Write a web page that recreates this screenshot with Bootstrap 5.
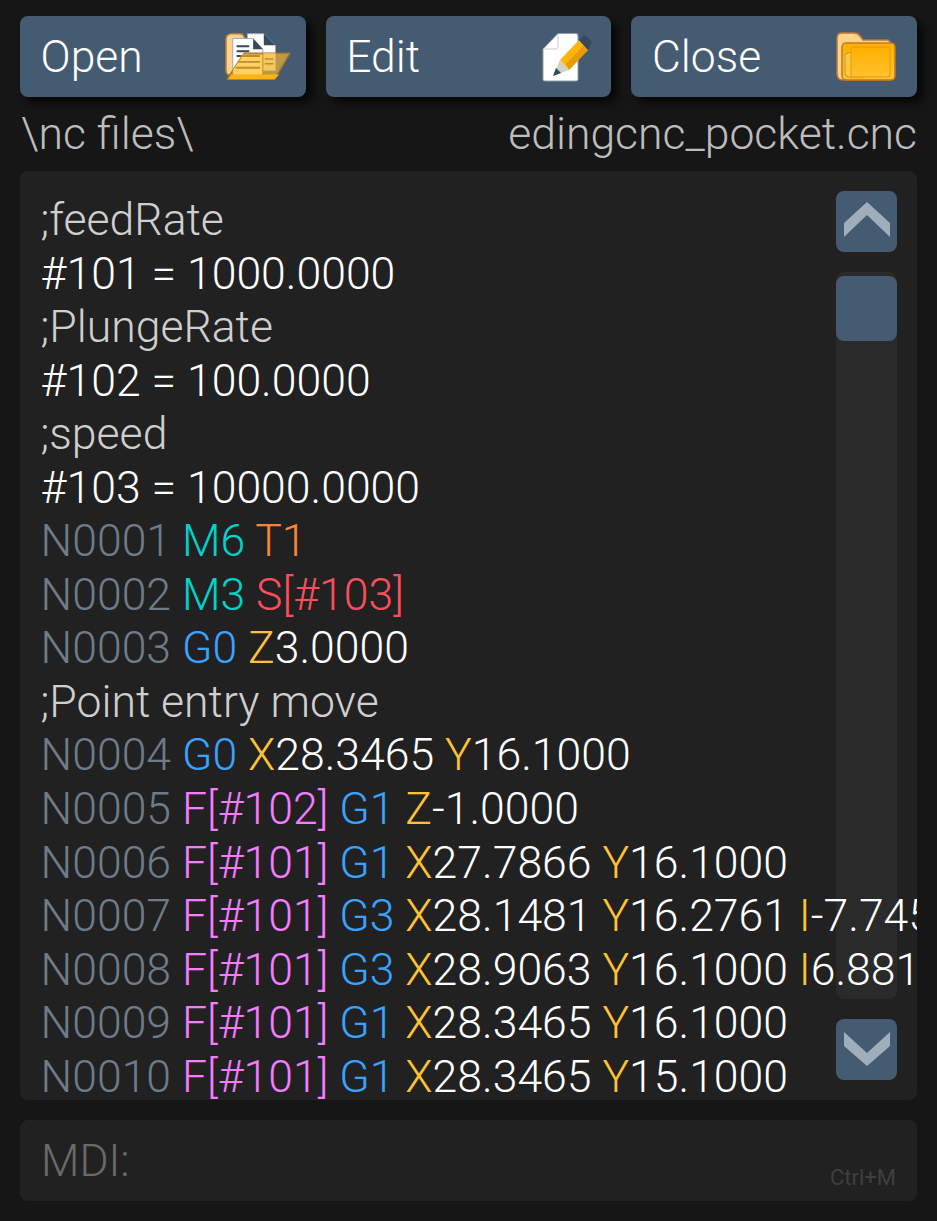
<!DOCTYPE html>
<html lang="en"><head><meta charset="utf-8">
<link href="https://cdn.jsdelivr.net/npm/bootstrap@5.3.0/dist/css/bootstrap.min.css" rel="stylesheet">
<style>
html,body{height:100%;}
body{background:#161616;font-family:Roboto,"Liberation Sans",sans-serif;font-weight:300;width:937px;height:1221px;overflow:hidden;padding:16px 20px 20px;}
.tool-row{gap:20px;height:81px;}
.tool-btn{flex:1 1 0;background:#445b72;color:#fff;border:0;border-radius:8px;font-size:44.4px;font-weight:300;line-height:1;padding:0 21px 0 21px;box-shadow:6px 6px 8px rgba(0,0,0,.7);height:81px;}
.btn-label{margin:2px 0 0 -.4px;}
.tool-btn svg{display:block;}
.ico-open{margin-right:-6px;}
.ico-edit{margin-right:-2px;}
.path-row{height:74px;padding:0 0 10px 1px;color:#bdbdbd;font-size:44.5px;line-height:74px;}
.code-panel{position:relative;height:929px;background:#212121;border-radius:8px;overflow:hidden;padding:23px 0 0 20.6px;font-size:44.56px;line-height:53.56px;white-space:nowrap;color:#fff;}
.code-line{height:53.56px;position:relative;z-index:2;}
.cm{color:#cfcfcf}.ln{color:#6e7c8a}.mc{color:#00d2ca}.tc{color:#ff8438}.sc{color:#ff4d5e}.gc{color:#3aa3ff}.ax{color:#ffc233}.fc{color:#f47cff}
.sb-track{position:absolute;left:816px;top:101px;width:61px;height:727px;background:#2a2a2a;border-radius:8px;z-index:1;}
.sb-btn{position:absolute;left:816px;width:61px;background:#445b72;border-radius:8px;z-index:1;display:flex;align-items:center;justify-content:center;}
.sb-up{top:20px;height:61px;}
.sb-thumb{top:105px;height:65px;}
.sb-down{top:848px;height:61px;}
.sb-ico-up{margin-top:-3px;}
.sb-ico-down{margin-top:-1px;}
.mdi-box{position:relative;height:81px;margin-top:20px;background:#212121;border-radius:8px;color:#6a6a6a;font-size:44.4px;line-height:83px;padding-left:21px;}
.mdi-hint{position:absolute;right:21px;bottom:10px;font-size:22px;line-height:26px;color:#3f3f3f;font-weight:400;}
</style></head><body>
<div class="d-flex tool-row">
<button class="tool-btn d-flex align-items-center justify-content-between"><span class="btn-label">Open</span>
<svg class="ico-open" width="66" height="50" viewBox="0 0 68 50">
<path d="M1 7q0-6 6-6h8q5 0 5 5v38H6q-5 0-5-5z" fill="#fdd28a" stroke="#b9783a" stroke-width="1.5"/>
<path d="M23 1h17l12 12v26H23z" fill="#fff" stroke="#9aa8b2"/><path d="M40 1l12 12H40z" fill="#34495a"/>
<path d="M8 6h21l10 11v27H8z" fill="#fff" stroke="#9aa8b2"/><path d="M29 6l10 11H29z" fill="#34495a"/>
<path d="M12 14h13M12 19h13M12 24h8" stroke="#34495a" stroke-width="2"/>
<path d="M2 48L20 21h47L51 48z" fill="#c9a043" fill-opacity=".9" stroke="#a5702c" stroke-width="1.5" stroke-linejoin="round"/>
<path d="M39 21h13v18H39z" fill="#ffd163" fill-opacity=".8"/><path d="M41 27h9M41 32h9" stroke="#bd8e2b" stroke-width="1.5"/>
<path d="M19 22H39V44H8V38z" fill="#ffd163" stroke="#c98a25"/>
<path d="M16 24h20M13 30h23M11 36h25" stroke="#bd8e2b" stroke-width="2"/>
<path d="M3 48l4-5h49l-5 5z" fill="#ffb310"/></svg></button>
<button class="tool-btn d-flex align-items-center justify-content-between"><span class="btn-label">Edit</span>
<svg class="ico-edit" width="50" height="50" viewBox="0 0 50 50">
<path d="M16 1.500h18q2 0 2 2v44q0 1.500-2 1.500H3q-2 0-2-1.500V17z" fill="#fff" stroke="#8f9ea8"/>
<path d="M16 2v13q0 2-2 2H1" fill="none" stroke="#c5ced4"/>
<path d="M18 28L37 8l9 10-19 20z" fill="#ffb60a"/><path d="M24 32L41 14l5 4-19 20z" fill="#e89a00"/>
<path d="M37 8l4-4q2-1 3 0l5 5q1 2 0 3l-3 6z" fill="#34495a"/>
<path d="M18 28l9 10-16 6z" fill="#ccd4c6"/><path d="M11 44l3-8 5 5z" fill="#34495a"/></svg></button>
<button class="tool-btn d-flex align-items-center justify-content-between"><span class="btn-label">Close</span>
<svg width="60" height="50" viewBox="0 0 60 50"><defs><linearGradient id="fg" x1="0" y1="0" x2="0" y2="1"><stop offset="0" stop-color="#ffb000"/><stop offset="1" stop-color="#ffc22e"/></linearGradient></defs>
<path d="M1 6q0-5 5-5h12q4 0 6 3l3 4h24q3 0 3 3v37H7q-6 0-6-6z" fill="#fdd28a" stroke="#b9783a" stroke-width="1.5"/>
<rect x="6" y="11" width="53" height="37" rx="4" fill="url(#fg)" stroke="#c07a1c" stroke-width="1.5"/>
<path d="M9 22l6-2 4-4 3 0v29H13q-4 0-4-4z" fill="#ffc93f" stroke="#d09424"/>
<rect x="15" y="15" width="39" height="30" rx="2" fill="url(#fg)" stroke="#e09a10"/></svg></button>
</div>
<div class="d-flex justify-content-between path-row"><span>\nc files\</span><span>edingcnc_pocket.cnc</span></div>
<div class="code-panel">
<div class="code-line cm">;feedRate</div>
<div class="code-line">#101 = 1000.0000</div>
<div class="code-line cm">;PlungeRate</div>
<div class="code-line">#102 = 100.0000</div>
<div class="code-line cm">;speed</div>
<div class="code-line">#103 = 10000.0000</div>
<div class="code-line"><span class="ln">N0001</span> <span class="mc">M6</span> <span class="tc">T1</span></div>
<div class="code-line"><span class="ln">N0002</span> <span class="mc">M3</span> <span class="sc">S[#103]</span></div>
<div class="code-line"><span class="ln">N0003</span> <span class="gc">G0</span> <span class="ax">Z</span>3.0000</div>
<div class="code-line cm">;Point entry move</div>
<div class="code-line"><span class="ln">N0004</span> <span class="gc">G0</span> <span class="ax">X</span>28.3465 <span class="ax">Y</span>16.1000</div>
<div class="code-line"><span class="ln">N0005</span> <span class="fc">F[#102]</span> <span class="gc">G1</span> <span class="ax">Z</span>-1.0000</div>
<div class="code-line"><span class="ln">N0006</span> <span class="fc">F[#101]</span> <span class="gc">G1</span> <span class="ax">X</span>27.7866 <span class="ax">Y</span>16.1000</div>
<div class="code-line"><span class="ln">N0007</span> <span class="fc">F[#101]</span> <span class="gc">G3</span> <span class="ax">X</span>28.1481 <span class="ax">Y</span>16.2761 <span class="ax">I</span>-7.7456</div>
<div class="code-line"><span class="ln">N0008</span> <span class="fc">F[#101]</span> <span class="gc">G3</span> <span class="ax">X</span>28.9063 <span class="ax">Y</span>16.1000 <span class="ax">I</span>6.8819</div>
<div class="code-line"><span class="ln">N0009</span> <span class="fc">F[#101]</span> <span class="gc">G1</span> <span class="ax">X</span>28.3465 <span class="ax">Y</span>16.1000</div>
<div class="code-line"><span class="ln">N0010</span> <span class="fc">F[#101]</span> <span class="gc">G1</span> <span class="ax">X</span>28.3465 <span class="ax">Y</span>15.1000</div>
<div class="sb-track"></div>
<div class="sb-btn sb-up"><svg class="sb-ico-up" width="46" height="36" viewBox="0 0 46 36"><path d="M0 35V21L23 0l23 21v14L23 13z" fill="#a0aebb"/></svg></div>
<div class="sb-btn sb-thumb"></div>
<div class="sb-btn sb-down"><svg class="sb-ico-down" width="46" height="36" viewBox="0 0 46 36"><path d="M0 1v14l23 20 23-20V1L23 22z" fill="#a0aebb"/></svg></div>
</div>
<div class="mdi-box">MDI:<span class="mdi-hint">Ctrl+M</span></div>
<script src="https://cdn.jsdelivr.net/npm/bootstrap@5.3.0/dist/js/bootstrap.bundle.min.js"></script>
</body></html>
